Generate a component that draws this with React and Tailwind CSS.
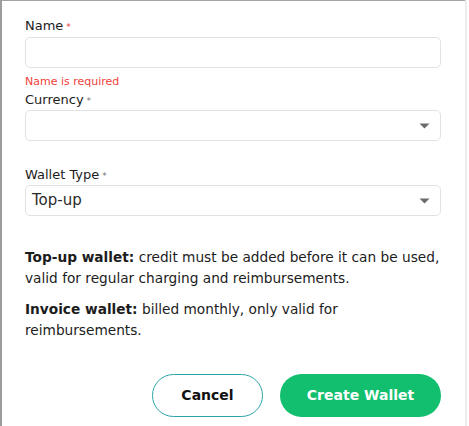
import React from "react";

function Caret() {
  return (
    <svg width="11" height="6" viewBox="0 0 11 6" className="absolute right-[10px] top-1/2 -translate-y-1/2">
      <path d="M0.5 0.5 L10.5 0.5 L5.5 5.5 Z" fill="#6b6b6b" />
    </svg>
  );
}

function Label({ children, error }) {
  return (
    <div className="text-[13px] leading-[16px] font-medium text-[#1c1c1c]">
      {children}
      <span
        className={
          "text-[9px] align-top ml-[3px] relative top-[1px] " +
          (error ? "text-[#e53935]" : "text-[#777777]")
        }
      >
        *
      </span>
    </div>
  );
}

export default function App() {
  return (
    <div
      className="flex w-[469px] h-[426px] overflow-hidden bg-white"
      style={{ fontFamily: '"DejaVu Sans", sans-serif' }}
    >
      <div className="w-[2px] shrink-0 h-full bg-[#9c9c9c]" />
      <div className="flex-1 min-w-0 h-full bg-white border-t border-[#a3a3a3] pl-[23px] pr-[24px] pt-[17px] flex flex-col">
        <Label error>Name</Label>
        <div className="mt-[3px] h-[31px] rounded-[5px] border border-[#e2e2e2]" />
        <div className="mt-[7px] text-[11px] leading-[14px] text-[#f0413a]">Name is required</div>
        <div className="mt-[3px]">
          <Label>Currency</Label>
        </div>
        <div className="relative mt-[2px] h-[31px] rounded-[5px] border border-[#e2e2e2]">
          <Caret />
        </div>
        <div className="mt-[26px]">
          <Label>Wallet Type</Label>
        </div>
        <div className="relative mt-[2px] h-[31px] rounded-[5px] border border-[#e2e2e2] flex items-center pl-[6px] text-[15px] text-[#2a2a2a]">
          Top-up
          <Caret />
        </div>
        <div className="mt-[31px] text-[13.7px] leading-[21px] text-[#1c1c1c] whitespace-nowrap">
          <span className="font-bold">Top-up wallet:</span> credit must be added before it can be used,
          <br />
          valid for regular charging and reimbursements.
        </div>
        <div className="mt-[10px] text-[13.7px] leading-[21px] text-[#1c1c1c] whitespace-nowrap">
          <span className="font-bold">Invoice wallet:</span> billed monthly, only valid for
          <br />
          reimbursements.
        </div>
        <div className="mt-[33px] flex justify-end gap-[17px]">
          <button className="w-[111px] h-[43px] rounded-full border border-[#2ba3a9] bg-white text-[14px] font-bold text-[#111]">
            Cancel
          </button>
          <button className="w-[161px] h-[43px] rounded-full bg-[#12bf6e] text-[14px] font-bold text-white">
            Create Wallet
          </button>
        </div>
      </div>
      <div className="w-[2px] shrink-0 h-full bg-[#ececec]" />
      <div className="w-[2px] shrink-0 h-full bg-white" />
    </div>
  );
}
